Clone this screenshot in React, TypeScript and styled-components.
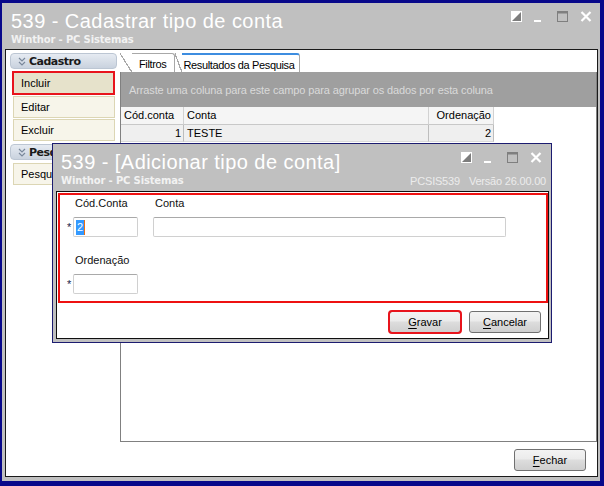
import { FC, ReactNode } from "react";
import styled, { createGlobalStyle } from "styled-components";

const GlobalStyle = createGlobalStyle`
  html,
  body {
    margin: 0;
    padding: 0;
    background: #08088a;
  }

  body {
    font: 11px "Liberation Sans", Arial, sans-serif;
    color: #000;
  }

  * {
    box-sizing: border-box;
  }
`;

const Window = styled.div`
  position: relative;
  width: 604px;
  height: 486px;
  display: flex;
  flex-direction: column;
  background: #c0c0c0;
  border-style: solid;
  border-color: #08088a;
  border-width: 3px 4px 5px 2px;
`;

const Header = styled.div<{ $pad: string; $height: number }>`
  height: ${(p) => p.$height}px;
  display: flex;
  flex-direction: column;
  padding: ${(p) => p.$pad};
`;

const HeaderLine = styled.div`
  display: flex;
  justify-content: space-between;
  align-items: flex-start;
`;

const Title = styled.div`
  font:
    20px "Liberation Sans",
    Arial,
    sans-serif;
  letter-spacing: 0.45px;
  line-height: 23px;
  color: #fff;
  white-space: nowrap;
`;

const SubTitle = styled.div`
  margin-top: 1px;
  font:
    bold 10px "DejaVu Sans",
    Verdana,
    sans-serif;
  letter-spacing: -0.15px;
  line-height: 12px;
  color: #f2f2f2;
`;

const Version = styled.div`
  display: flex;
  gap: 9px;
  margin-top: 1px;
  margin-right: -4px;
  font:
    11px "Liberation Sans",
    Arial,
    sans-serif;
  letter-spacing: -0.2px;
  line-height: 13px;
  color: #ececec;
`;

const Controls = styled.div`
  display: flex;
  gap: 12px;
  margin-top: 1px;

  svg {
    display: block;
  }
`;

const ContentPanel = styled.div`
  flex: 1;
  display: flex;
  flex-direction: column;
  margin: 0 2px 4px 3px;
  background: #fff;
  border: 1px solid #1a1a1a;
`;

const Body = styled.div`
  flex: 1;
  display: flex;
  gap: 3px;
  padding: 3px 0 0 4px;
  min-height: 0;
`;

const Sidebar = styled.div`
  width: 107px;
  display: flex;
  flex-direction: column;
`;

const SectionHeader = styled.div<{ $first?: boolean }>`
  height: 16px;
  margin: ${(p) => (p.$first ? "0" : "3px")} 0 2px;
  display: flex;
  align-items: center;
  gap: 3px;
  padding-left: 7px;
  border: 1px solid #bcc6d3;
  border-radius: 4px;
  background: linear-gradient(#e6ebf2, #c9d2de);
  font:
    bold 11px "DejaVu Sans",
    Verdana,
    sans-serif;
  letter-spacing: -0.5px;
  color: #1a1a1a;
  white-space: nowrap;
  overflow: hidden;
`;

const SideItem = styled.div<{ $active?: boolean }>`
  display: flex;
  align-items: center;
  height: ${(p) => (p.$active ? 24 : 22)}px;
  margin: ${(p) => (p.$active ? "0 2px 0 2px" : "1px 2px 0 3px")};
  padding-left: 7px;
  border: ${(p) => (p.$active ? "2px solid #e8141c" : "1px solid #dcd6b4")};
  background: ${(p) => (p.$active ? "#e6e2cb" : "#f7f5ea")};
  white-space: nowrap;
  overflow: hidden;
`;

const TabArea = styled.div`
  flex: 1;
  display: flex;
  flex-direction: column;
  min-width: 0;
`;

const TabStrip = styled.div`
  height: 19px;
  display: flex;
  align-items: stretch;
  padding-left: 12px;
`;

const Tab = styled.div<{ $active?: boolean; $slant: number; $offset: number }>`
  position: relative;
  margin-left: ${(p) => p.$offset}px;
  padding: 4px ${(p) => (p.$active ? 5 : 7)}px 0 ${(p) => (p.$active ? 2 : 7)}px;
  background: #fff;
  border-top: ${(p) => (p.$active ? "2px solid #3d8de0" : "1px solid #a8a8a8")};
  border-right: 1px solid #a8a8a8;
  border-top-right-radius: 3px;
  z-index: ${(p) => (p.$active ? 2 : 1)};
  white-space: nowrap;
  line-height: 13px;
  letter-spacing: -0.35px;

  &::before {
    content: "";
    position: absolute;
    top: ${(p) => (p.$active ? -2 : -1)}px;
    bottom: 0;
    left: -${(p) => p.$slant}px;
    width: ${(p) => p.$slant}px;
    background: linear-gradient(
      to top right,
      transparent calc(50% - 0.8px),
      #a8a8a8 calc(50% - 0.8px),
      #a8a8a8 calc(50% + 0.4px),
      #fff calc(50% + 0.4px)
    );
  }
`;

const GridFrame = styled.div`
  flex: 1;
  border: 1px solid #808080;
  border-top: none;
  background: #fff;
`;

const GroupPanel = styled.div`
  height: 35px;
  padding: 12px 0 0 8px;
  background: #9f9f9f;
  color: #dadada;
  letter-spacing: -0.12px;
  white-space: nowrap;
`;

const GridRow = styled.div<{ $height: number }>`
  display: grid;
  grid-template-columns: 63px 245px 65px;
  height: ${(p) => p.$height}px;
`;

const HeaderCell = styled.div<{ $align?: string }>`
  padding: 2px 2px 0 3px;
  text-align: ${(p) => p.$align ?? "left"};
  background: #f5f5f5;
  border-right: 1px solid #d2d2d2;
  border-bottom: 1px solid #c8c8c8;
  white-space: nowrap;
`;

const DataCell = styled.div<{ $align?: string }>`
  padding: 2px 2px 0 3px;
  text-align: ${(p) => p.$align ?? "left"};
  background: #efefef;
  border-right: 1px solid #bdbdbd;
  border-bottom: 1px solid #dadada;
  white-space: nowrap;
`;

const Footer = styled.div`
  height: 34px;
  display: flex;
  justify-content: flex-end;
  padding: 7px 11px 0 0;
`;

const Button = styled.div<{ $highlight?: boolean }>`
  width: 72px;
  height: 22px;
  display: flex;
  align-items: center;
  justify-content: center;
  border: 1px solid #707070;
  border-radius: 3px;
  background: linear-gradient(#f3f3f3 0%, #ebebeb 45%, #dddddd 50%, #cfcfcf 100%);
  outline: ${(p) => (p.$highlight ? "2px solid #e8141c" : "none")};
  outline-offset: -1px;

  u {
    text-decoration-thickness: 1px;
    text-underline-offset: 2px;
  }
`;

const Dialog = styled.div`
  position: absolute;
  left: 50px;
  top: 140px;
  width: 500px;
  height: 200px;
  display: flex;
  flex-direction: column;
  background: #c0c0c0;
  border: 1px solid #1c1c70;
`;

const DialogPanel = styled.div`
  height: 148px;
  margin: 0 2px 3px 3px;
  padding: 1px 0 0 1px;
  background: #fff;
  border: 1px solid #101010;
`;

const RedFrame = styled.div`
  height: 110px;
  padding: 2px 0 0 6px;
  border: 2px solid #ee1111;
`;

const FieldRow = styled.div<{ $top?: number }>`
  display: flex;
  gap: 15px;
  margin-top: ${(p) => p.$top ?? 0}px;
`;

const Field = styled.div`
  display: flex;
  flex-direction: column;
`;

const FieldLabel = styled.div<{ $indent: number }>`
  margin: 0 0 7px ${(p) => p.$indent}px;
  line-height: 13px;
  color: #111;
`;

const InputLine = styled.div`
  display: flex;
  align-items: center;
`;

const Star = styled.span`
  width: 7px;
  padding-left: 1px;
  color: #1a1a4a;
  line-height: 13px;
`;

const TextInput = styled.div<{ $width: number }>`
  width: ${(p) => p.$width}px;
  height: 20px;
  display: flex;
  align-items: center;
  border: 1px solid #d0d0d0;
  border-top-color: #a9a9a9;
  border-radius: 2px;
  background: #fff;
`;

const Selected = styled.span`
  margin-left: 2px;
  padding: 0 1px;
  height: 15px;
  line-height: 15px;
  background: #3399ff;
  color: #fff;
`;

const Caret = styled.span`
  width: 1px;
  height: 15px;
  background: #f07010;
`;

const ButtonBar = styled.div`
  display: flex;
  justify-content: flex-end;
  gap: 8px;
  padding: 8px 7px 0 0;
`;

// title bar buttons: dock, minimise, maximise, close
const WindowControls: FC = () => (
  <Controls>
    <svg width="11" height="11" viewBox="0 0 11 11">
      <rect x="0" y="0" width="11" height="11" fill="#fff" />
      <polygon points="10,1 10,10 1,10" fill="#7d7d7d" />
    </svg>
    <svg width="11" height="11" viewBox="0 0 11 11">
      <rect x="0" y="9" width="7" height="2" fill="#fff" />
    </svg>
    <svg width="11" height="11" viewBox="0 0 11 11">
      <rect x="0.5" y="0.5" width="10" height="10" fill="none" stroke="#7f7f7f" />
      <rect x="0" y="0" width="11" height="2.5" fill="#7f7f7f" />
    </svg>
    <svg width="12" height="11" viewBox="0 0 12 11">
      <path d="M1.5 1 L10.5 10 M10.5 1 L1.5 10" stroke="#fff" strokeWidth="2.2" />
    </svg>
  </Controls>
);

const Chevrons: FC = () => (
  <svg width="8" height="9" viewBox="0 0 8 9">
    <g fill="none" stroke="#7a889b" strokeWidth="1.2">
      <polyline points="1,1 4,4 7,1" />
      <polyline points="1,5 4,8 7,5" />
    </g>
  </svg>
);

const Mnemonic: FC<{ first: string; rest: string }> = ({ first, rest }) => (
  <span>
    <u>{first}</u>
    {rest}
  </span>
);

const Section: FC<{ title: string; first?: boolean; children: ReactNode }> = ({
  title,
  first,
  children,
}) => (
  <>
    <SectionHeader $first={first}>
      <Chevrons />
      {title}
    </SectionHeader>
    {children}
  </>
);

export default function App() {
  return (
    <>
      <GlobalStyle />
      <Window>
        <Header $pad="7px 8px 0 9px" $height={46}>
          <HeaderLine>
            <Title>539 - Cadastrar tipo de conta</Title>
            <WindowControls />
          </HeaderLine>
          <SubTitle>Winthor - PC Sistemas</SubTitle>
        </Header>

        <ContentPanel>
          <Body>
            <Sidebar>
              <Section title="Cadastro" first>
                <SideItem $active>Incluir</SideItem>
                <SideItem>Editar</SideItem>
                <SideItem>Excluir</SideItem>
              </Section>
              <Section title="Pesquisa">
                <SideItem>Pesquisar</SideItem>
              </Section>
            </Sidebar>

            <TabArea>
              <TabStrip>
                <Tab $slant={12} $offset={0}>
                  Filtros
                </Tab>
                <Tab $active $slant={7} $offset={7}>
                  Resultados da Pesquisa
                </Tab>
              </TabStrip>
              <GridFrame>
                <GroupPanel>
                  Arraste uma coluna para este campo para agrupar os dados por esta coluna
                </GroupPanel>
                <GridRow $height={18}>
                  <HeaderCell>Cód.conta</HeaderCell>
                  <HeaderCell>Conta</HeaderCell>
                  <HeaderCell $align="right">Ordenação</HeaderCell>
                </GridRow>
                <GridRow $height={17}>
                  <DataCell $align="right">1</DataCell>
                  <DataCell>TESTE</DataCell>
                  <DataCell $align="right">2</DataCell>
                </GridRow>
              </GridFrame>
            </TabArea>
          </Body>
          <Footer>
            <Button>
              <Mnemonic first="F" rest="echar" />
            </Button>
          </Footer>
        </ContentPanel>

        <Dialog>
          <Header $pad="7px 9px 0 8px" $height={47}>
            <HeaderLine>
              <Title>539 - [Adicionar tipo de conta]</Title>
              <WindowControls />
            </HeaderLine>
            <HeaderLine>
              <SubTitle>Winthor - PC Sistemas</SubTitle>
              <Version>
                <span>PCSIS539</span>
                <span>Versão 26.00.00</span>
              </Version>
            </HeaderLine>
          </Header>
          <DialogPanel>
            <RedFrame>
              <FieldRow>
                <Field>
                  <FieldLabel $indent={9}>Cód.Conta</FieldLabel>
                  <InputLine>
                    <Star>*</Star>
                    <TextInput $width={65}>
                      <Selected>2</Selected>
                      <Caret />
                    </TextInput>
                  </InputLine>
                </Field>
                <Field>
                  <FieldLabel $indent={2}>Conta</FieldLabel>
                  <TextInput $width={353} />
                </Field>
              </FieldRow>
              <FieldRow $top={17}>
                <Field>
                  <FieldLabel $indent={9}>Ordenação</FieldLabel>
                  <InputLine>
                    <Star>*</Star>
                    <TextInput $width={65} />
                  </InputLine>
                </Field>
              </FieldRow>
            </RedFrame>
            <ButtonBar>
              <Button $highlight>
                <Mnemonic first="G" rest="ravar" />
              </Button>
              <Button>
                <Mnemonic first="C" rest="ancelar" />
              </Button>
            </ButtonBar>
          </DialogPanel>
        </Dialog>
      </Window>
    </>
  );
}
